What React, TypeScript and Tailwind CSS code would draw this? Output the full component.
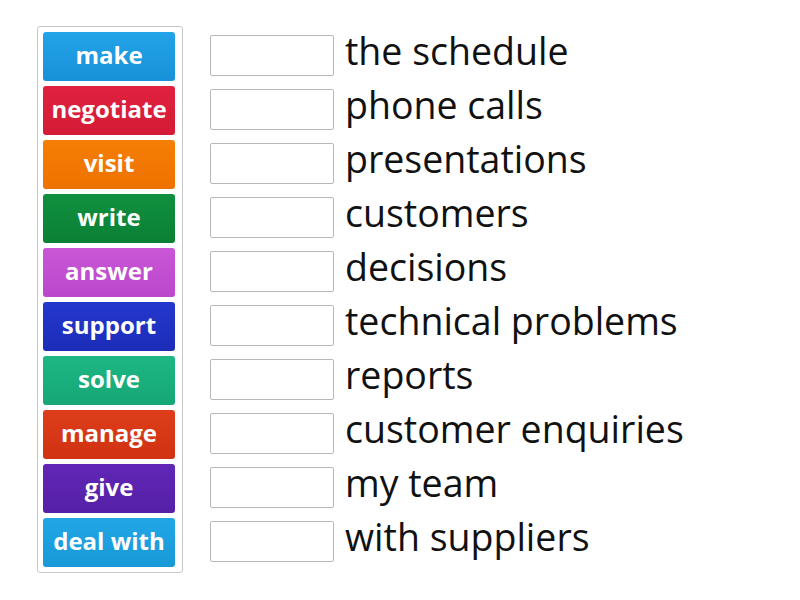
import React from "react";

const tiles: { label: string; bg: string }[] = [
  { label: "make", bg: "bg-[linear-gradient(#23a3e8,#1791d9)]" },
  { label: "negotiate", bg: "bg-[linear-gradient(#e0213f,#d41b36)]" },
  { label: "visit", bg: "bg-[linear-gradient(#f57e05,#ee7200)]" },
  { label: "write", bg: "bg-[linear-gradient(#10903f,#0b8035)]" },
  { label: "answer", bg: "bg-[linear-gradient(#c957d6,#bb47cc)]" },
  { label: "support", bg: "bg-[linear-gradient(#2438cd,#1b2cb8)]" },
  { label: "solve", bg: "bg-[linear-gradient(#1db784,#16a775)]" },
  { label: "manage", bg: "bg-[linear-gradient(#dd3d1a,#d03212)]" },
  { label: "give", bg: "bg-[linear-gradient(#6126b6,#5520a6)]" },
  { label: "deal with", bg: "bg-[linear-gradient(#22a6e6,#1899d8)]" },
];

const phrases = [
  "the schedule",
  "phone calls",
  "presentations",
  "customers",
  "decisions",
  "technical problems",
  "reports",
  "customer enquiries",
  "my team",
  "with suppliers",
];

export default function App() {
  return (
    <div
      className="w-[800px] h-[600px] bg-white flex pl-[37px] pt-[26px]"
      style={{ fontFamily: '"Open Sans", sans-serif' }}
    >
      <div className="w-[146px] h-[547px] border border-[#c8c8c8] rounded-[3px] pt-[5px] pl-[5px] flex flex-col gap-[5px]">
        {tiles.map((t) => (
          <div
            key={t.label}
            className={`w-[132px] h-[49px] rounded-[3px] flex items-center justify-center text-white font-bold text-[24px] leading-none ${t.bg}`}
          >
            <span className="-mt-[3px]">{t.label}</span>
          </div>
        ))}
      </div>
      <div className="ml-[27px] pt-[5px] flex flex-col">
        {phrases.map((p) => (
          <div key={p} className="h-[54px] flex items-center">
            <div className="w-[124px] h-[41px] border border-[#b8b8b8] rounded-[2px] bg-white mb-[5px]" />
            <span className="ml-[11px] text-[37.5px] text-[#111] leading-none mb-[14px]">{p}</span>
          </div>
        ))}
      </div>
    </div>
  );
}
